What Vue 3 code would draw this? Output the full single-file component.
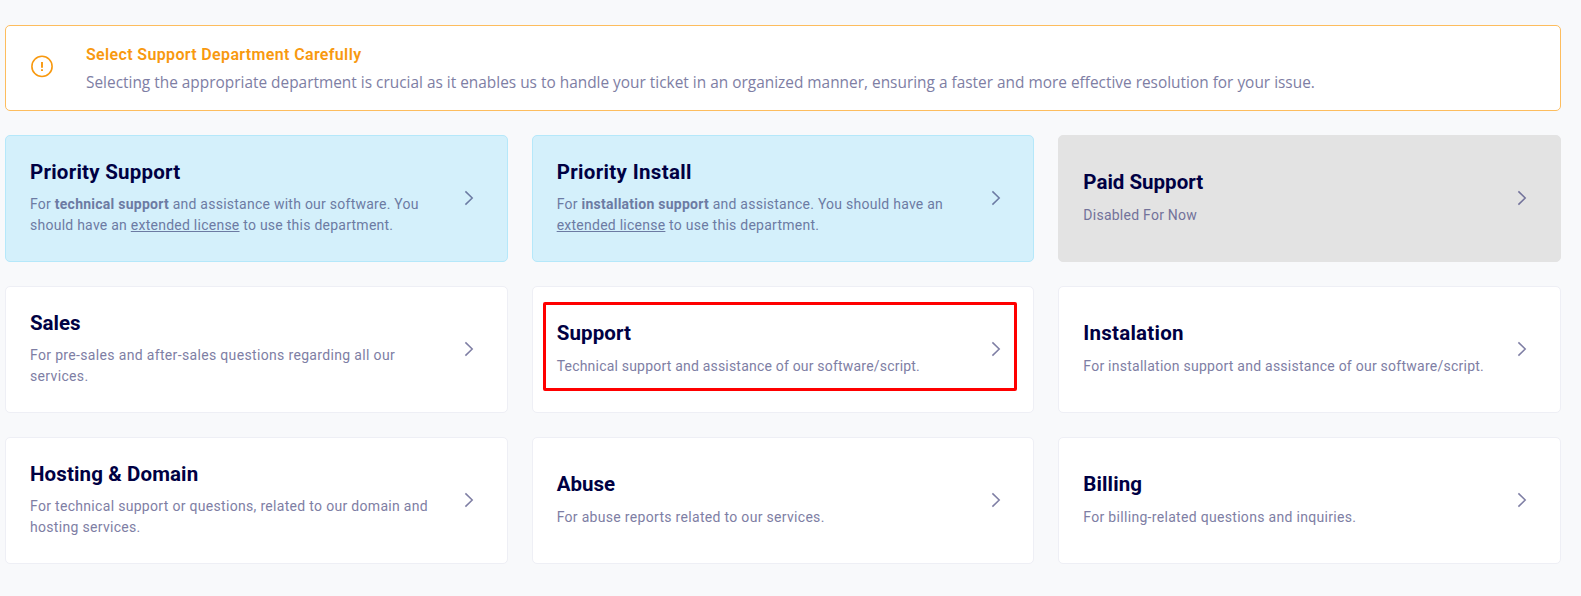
<script setup>
const departments = [
  { id: 1, key: 'priority-support', name: 'Priority Support', type: 'priority', text: 'For <b>technical support</b> and assistance with our software. You should have an <u>extended license</u> to use this department.' },
  { id: 2, key: 'priority-install', name: 'Priority Install', type: 'priority', text: 'For <b>installation support</b> and assistance. You should have an <u>extended license</u> to use this department.' },
  { id: 3, key: 'paid', name: 'Paid Support', type: 'disabled', text: 'Disabled For Now' },
  { id: 4, key: 'sales', name: 'Sales', text: 'For pre-sales and after-sales questions regarding all our services.' },
  { id: 5, key: 'support', name: 'Support', marked: true, text: 'Technical support and assistance of our software/script.' },
  { id: 6, key: 'instalation', name: 'Instalation', text: 'For installation support and assistance of our software/script.' },
  { id: 7, key: 'hosting', name: 'Hosting & Domain', text: 'For technical support or questions, related to our domain and hosting services.' },
  { id: 8, key: 'abuse', name: 'Abuse', text: 'For abuse reports related to our services.' },
  { id: 9, key: 'billing', name: 'Billing', text: 'For billing-related questions and inquiries.' }
];
</script>

<template>
  <div class="departments">
    <div class="notice">
      <svg class="notice-icon" width="24" height="24" viewBox="0 0 24 24" fill="none">
        <circle cx="12" cy="12.4" r="10.1" stroke="currentColor" stroke-width="1.6" />
        <path d="M12 8v5.8M12 15.3v1.8" stroke="currentColor" stroke-width="1.9" />
      </svg>
      <div>
        <h5>Select Support Department Carefully</h5>
        <p>Selecting the appropriate department is crucial as it enables us to handle your ticket in an organized manner, ensuring a faster and more effective resolution for your issue.</p>
      </div>
    </div>

    <div class="grid">
      <a
        v-for="department in departments"
        :key="department.id"
        class="card"
        :class="[department.type, department.key]"
      >
        <div class="card-body">
          <h4>{{ department.name }}</h4>
          <p v-html="department.text"></p>
        </div>
        <svg class="chevron" width="10" height="16" viewBox="0 0 10 16" fill="none">
          <path d="M1.4 1.4L8.2 8l-6.8 6.6" stroke="currentColor" stroke-width="1.5" />
        </svg>
        <span v-if="department.marked" class="marker"></span>
      </a>
    </div>
  </div>
</template>

<style>
body {
  margin: 0;
  background: #f8f9fb;
}
</style>

<style scoped>
.departments {
  box-sizing: border-box;
  height: 596px;
  padding: 25px 20px 0 5px;
  font-family: Roboto, "Liberation Sans", sans-serif;
  color: #7e7ea4;
}

h4, h5, p {
  margin: 0;
}

.notice {
  box-sizing: border-box;
  height: 86px;
  display: flex;
  align-items: center;
  gap: 32px;
  padding: 0 24px;
  background: #fff;
  border: 1px solid #fdbd5e;
  border-radius: 5px;
}

.notice-icon {
  flex: none;
  margin-top: -4px;
  color: #f8990f;
}

.notice h5 {
  font-size: 16px;
  line-height: 24px;
  font-weight: 600;
  letter-spacing: 0.35px;
  color: #f8990f;
}

.notice p {
  margin-top: 4px;
  margin-bottom: -1px;
  font-family: "Open Sans", sans-serif;
  font-size: 15.41px;
  line-height: 24px;
  white-space: nowrap;
}

.grid {
  display: grid;
  grid-template-columns: repeat(3, 1fr);
  grid-auto-rows: 127px;
  gap: 24px;
  margin-top: 24px;
}

.card {
  position: relative;
  box-sizing: border-box;
  display: flex;
  align-items: center;
  justify-content: space-between;
  padding: 0 32.8px 0 24px;
  background: #fff;
  border: 1px solid #eeeff5;
  border-radius: 5px;
}

.card.priority {
  background: #d4f0fb;
  border-color: #b5e8fa;
  color: #6c7ba3;
}

.card.disabled {
  background: #e3e3e3;
  border-color: #e3e3e3;
  color: #72729a;
}

.card-body {
  width: 411px;
  margin-bottom: 2px;
}

.card h4 {
  margin-bottom: 9.2px;
  font-size: 20.5px;
  line-height: 26px;
  font-weight: 700;
  color: #000043;
}

.card p {
  font-size: 14px;
  line-height: 21px;
  letter-spacing: 0.31px;
}

.priority p {
  letter-spacing: 0.25px;
}

.sales p {
  letter-spacing: 0.34px;
}

.support p {
  letter-spacing: 0.2px;
}

.paid p,
.instalation p {
  letter-spacing: 0.25px;
}

.priority-support h4,
.instalation h4 {
  letter-spacing: 0.24px;
}

.priority-install h4 {
  letter-spacing: 0.33px;
}

.support h4,
.hosting h4,
.billing h4 {
  letter-spacing: 0.12px;
}

.chevron {
  flex: none;
  margin-top: -1px;
}

.marker {
  position: absolute;
  top: 15px;
  left: 10.5px;
  box-sizing: border-box;
  width: 474px;
  height: 89px;
  border: 3px solid #ff0000;
  border-radius: 2px;
}
</style>
